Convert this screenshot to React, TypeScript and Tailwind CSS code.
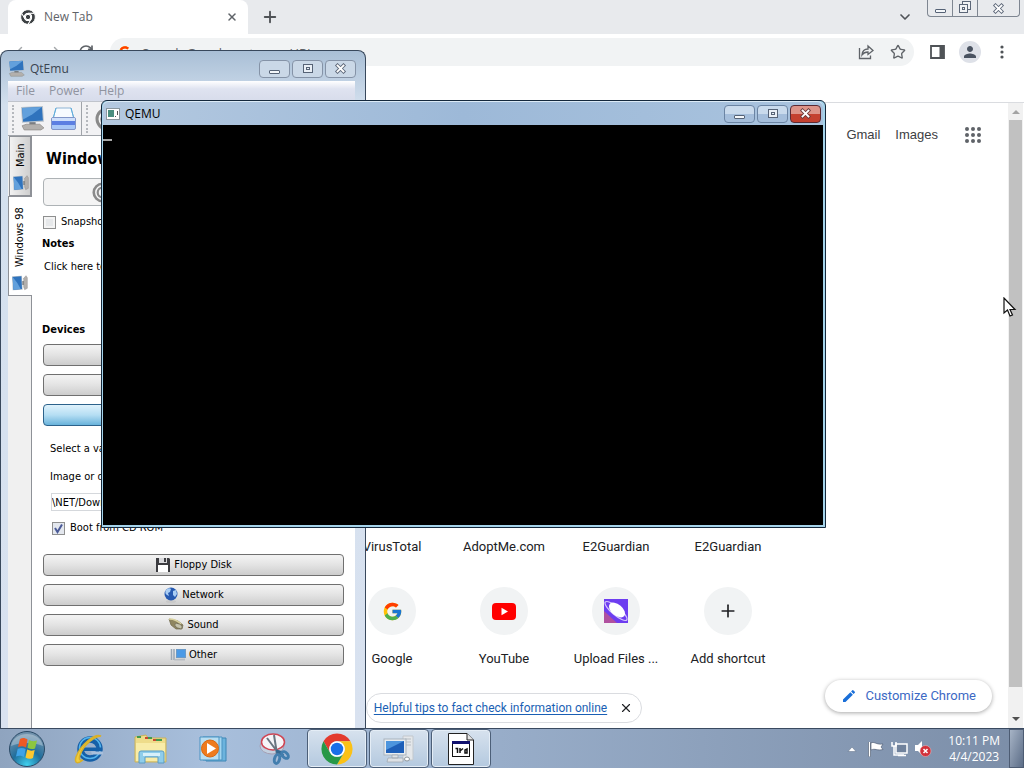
import { useState } from 'react';
import type { ReactNode } from 'react';
import { ChevronDown, Plus, X, ArrowLeft, ArrowRight, RotateCw, Star } from 'lucide-react';
import { FcGoogle } from 'react-icons/fc';
import { MdEdit, MdPerson } from 'react-icons/md';

const ChromeLogo = ({ size, mono = false }: { size: number; mono?: boolean }) => (
  <svg width={size} height={size} viewBox="0 0 48 48" stroke={mono ? '#fff' : 'none'} strokeWidth={mono ? 3 : 0}>
    <path d="M4.95 13A22 22 0 0 1 43.05 13L24 13A11 11 0 0 0 14.47 29.5Z" fill={mono ? '#3c4043' : '#e33b2e'} />
    <path d="M43.05 13A22 22 0 0 1 24 46L33.53 29.5A11 11 0 0 0 24 13Z" fill={mono ? '#3c4043' : '#fbc116'} />
    <path d="M24 46A22 22 0 0 1 4.95 13L14.47 29.5A11 11 0 0 0 33.53 29.5Z" fill={mono ? '#3c4043' : '#279847'} />
    <circle cx="24" cy="24" r="11" fill="#fff" />
    <circle cx="24" cy="24" r={mono ? 8 : 8.8} fill={mono ? '#3c4043' : '#1a6fe8'} />
  </svg>
);

const MinGlyph = () => (
  <svg width="13" height="12" viewBox="0 0 13 12">
    <rect x="1.5" y="7.5" width="10" height="3" rx="0.5" fill="#f4f7fa" stroke="#566376" />
  </svg>
);

const MaxGlyph = () => (
  <svg width="12" height="11" viewBox="0 0 12 11" fill="#e9eff6" stroke="#566376">
    <rect x="1.5" y="1.500" width="9" height="8" />
    <rect x="4.5" y="4.500" width="3" height="2" />
  </svg>
);

const RestoreGlyph = () => (
  <svg width="14" height="14" viewBox="0 0 14 14" fill="#f1f3f5" stroke="#5c6778">
    <rect x="4.5" y="0.5" width="8" height="8" />
    <rect x="1.5" y="3.5" width="8" height="8" />
    <rect x="4.5" y="6.5" width="2" height="2" />
  </svg>
);

const CloseGlyph = ({ dark = '#5c6778' }: { dark?: string }) => (
  <svg width="13" height="11" viewBox="0 0 13 11" strokeLinecap="square">
    <path d="M3.500 2.500L9.500 8.500M9.500 2.500L3.500 8.500" stroke={dark} strokeWidth="3.600" />
    <path d="M3.500 2.500L9.500 8.500M9.500 2.500L3.500 8.500" stroke="#fff" strokeWidth="1.800" />
  </svg>
);

const ComputerIcon = ({ size }: { size: number }) => (
  <svg width={size} height={size} viewBox="0 0 24 24">
    <path d="M1 1L22 0L23 15L2 16Z" fill="#b9c3cc" />
    <path d="M2 2L21 1L22 14L3 15Z" fill="#2f73bd" />
    <path d="M2 2L21 1L12 8L3 13Z" fill="#62a0dc" />
    <path d="M9 15.500H15V18H9Z" fill="#777d83" />
    <path d="M2 19L6 17.500H19L23 21L20 23H4Z" fill="#b3b0ad" stroke="#86827f" strokeWidth="0.600" />
  </svg>
);

const PrinterIcon = () => (
  <svg width="26" height="24" viewBox="0 0 26 24">
    <path d="M5 1H20L23 12H2Z" fill="#f7fbff" stroke="#8fb4d4" />
    <path d="M5 1L2 12M20 1L23 12" stroke="#5aaede" />
    <rect x="0.500" y="10.500" width="24" height="12" rx="1.500" fill="#a9c8f7" stroke="#8296c8" />
    <rect x="1" y="11" width="23" height="4" fill="#cfe0fb" />
    <rect x="1" y="14" width="23" height="4" fill="#5c7fe2" />
  </svg>
);

const RingIcon = ({ size }: { size: number }) => (
  <svg width={size} height={size} viewBox="0 0 24 24">
    <circle cx="12" cy="12" r="10" fill="#f4f4f4" stroke="#8a8a8a" strokeWidth="3" />
    <circle cx="12" cy="12" r="5.500" fill="none" stroke="#8a8a8a" strokeWidth="2.500" />
  </svg>
);

const FloppyIcon = () => (
  <svg width="16" height="16" viewBox="0 0 16 16">
    <path d="M1 1H14L15 2V15H1Z" fill="#3c3c40" />
    <rect x="4" y="1" width="8" height="5" fill="#d9d9dc" />
    <rect x="9" y="1" width="2" height="4" fill="#3c3c40" />
    <rect x="3" y="8" width="10" height="7" fill="#fff" />
  </svg>
);

const GlobeIcon = () => (
  <svg width="16" height="16" viewBox="0 0 16 16">
    <ellipse cx="8" cy="14.500" rx="5" ry="1.500" fill="#c9c9c9" />
    <circle cx="8" cy="7" r="6.500" fill="#2659b0" />
    <path d="M3 3C5 1 7 1 8 2L7 5L5 6L6 9L4 8C2 7 2 5 3 3ZM10 4L13 3L14 7L12 10L10 8Z" fill="#a9cdf4" />
  </svg>
);

const SoundIcon = () => (
  <svg width="16" height="16" viewBox="0 0 16 16">
    <path d="M1 2L10 4L15 8L14 12L8 12L3 8Z" fill="#8f8660" stroke="#6f674a" strokeWidth="0.700" />
    <path d="M1 2C6 2 10 4 13 7" fill="none" stroke="#d9d2a0" strokeWidth="1.500" />
    <ellipse cx="10.500" cy="9" rx="4" ry="2.200" fill="#c4c2ac" stroke="#6b6750" strokeWidth="0.700" transform="rotate(25 10.500 9)" />
  </svg>
);

const OtherIcon = () => (
  <svg width="16" height="16" viewBox="0 0 16 16">
    <path d="M1.500 2V13M4 2V13" stroke="#9aa7b4" strokeWidth="1.500" />
    <rect x="6.500" y="2.500" width="9" height="8" fill="#4b9ae6" stroke="#6c9ac6" />
    <path d="M5 12L15 11.500V13.500H4Z" fill="#b7bcc2" />
  </svg>
);

const WindowButtons = ({ active = false }: { active?: boolean }) => {
  const base = 'flex h-[18px] w-[31px] items-center justify-center rounded-sm border';
  const plain = active
    ? 'border-[#6b84a3] bg-linear-to-b from-[#c9daec] from-50% to-[#a5bedb] to-50%'
    : 'border-[#8593a7] bg-[#cad8e7]';
  return (
    <div className="flex gap-[2px]">
      <button aria-label="Minimize" className={base + ' ' + plain}><MinGlyph /></button>
      <button aria-label="Maximize" className={base + ' ' + plain}><MaxGlyph /></button>
      <button
        aria-label="Close"
        className={base + ' ' + (active ? 'border-[#5b2a33] bg-linear-to-b from-[#dd9388] from-50% to-[#c4402f] to-50%' : plain)}
      >
        <CloseGlyph dark={active ? '#6b3a3a' : undefined} />
      </button>
    </div>
  );
};

const Shortcut = ({ label, children }: { label: string; children?: ReactNode }) => (
  <a href="#" className="flex h-[82px] flex-col items-center justify-between">
    <span className="flex size-12 items-center justify-center rounded-full bg-[#f1f3f4]">{children}</span>
    <span className="text-[13px] leading-5 text-[#202124]">{label}</span>
  </a>
);

const Browser = () => (
  <div className="flex min-h-0 flex-1 flex-col bg-white">
    <div className="flex h-[34px] shrink-0 items-start bg-[#e8eaed] pl-2">
      <div className="flex h-[34px] w-60 items-center rounded-t-lg bg-white pr-[10px] pl-3 font-['Open_Sans',sans-serif] text-[12px] text-[#5f6368]">
        <ChromeLogo size={16} mono />
        <span className="ml-2 flex-1">New Tab</span>
        <button aria-label="Close tab"><X size={12} strokeWidth={3} /></button>
      </div>
      <button aria-label="New tab" className="mt-2 ml-[13px] text-[#4f5357]"><Plus size={18} strokeWidth={2.5} /></button>
      <button aria-label="Search tabs" className="mt-[9px] mr-[14px] ml-auto text-[#4f5357]"><ChevronDown size={16} strokeWidth={2.5} /></button>
      <div className="mr-1 flex h-[17px] rounded-b-sm border border-t-0 border-[#7e8691]">
        <button aria-label="Minimize" className="flex w-6 items-center justify-center"><MinGlyph /></button>
        <button aria-label="Restore" className="flex w-[26px] items-center justify-center border-x border-[#7e8691]"><RestoreGlyph /></button>
        <button aria-label="Close" className="flex w-[41px] items-center justify-center"><CloseGlyph /></button>
      </div>
    </div>

    <div className="flex h-9 shrink-0 items-center text-[#5f6368]">
      <div className="flex w-[110px] items-center justify-between pr-4 pl-[13px]">
        <button aria-label="Back"><ArrowLeft size={17} color="#a5a8ab" /></button>
        <button aria-label="Forward"><ArrowRight size={17} color="#a5a8ab" /></button>
        <button aria-label="Reload"><RotateCw size={16} strokeWidth={2.5} /></button>
      </div>
      <div className="flex h-7 flex-1 items-center rounded-full bg-[#f1f3f4] pr-2 pl-2">
        <FcGoogle size={14} />
        <input
          aria-label="Address bar"
          placeholder="Search Google or type a URL"
          className="ml-[10px] min-w-0 flex-1 bg-transparent pt-[3px] font-['Open_Sans',sans-serif] text-[13px] placeholder:text-[#5f6368]"
        />
        <button aria-label="Share" className="mr-4">
          <svg width="16" height="16" viewBox="0 0 16 16" fill="none" stroke="currentColor" strokeWidth="1.300">
            <path d="M1.500 4V14.500H12.500V11.500" />
            <path d="M4 11C4.300 7 6.500 5 10 5V2L15 6.500L10 10.500V8C7.500 8 5.500 8.800 4 11Z" />
          </svg>
        </button>
        <button aria-label="Bookmark"><Star size={16} /></button>
      </div>
      <div className="flex items-center pr-[15px] pl-4">
        <button aria-label="Side panel">
          <svg width="15" height="14" viewBox="0 0 15 14">
            <path d="M1 1H14V13H1Z" fill="#fff" stroke="#4f5357" strokeWidth="1.800" />
            <path d="M9.500 1H14V13H9.500Z" fill="#4f5357" />
          </svg>
        </button>
        <button aria-label="Profile" className="ml-[14px] flex size-[22px] items-center justify-center rounded-full bg-[#dee1e8] text-[#4a5361]">
          <MdPerson size={18} />
        </button>
        <button aria-label="Menu" className="ml-[14px]">
          <svg width="14" height="14" viewBox="0 0 14 14" fill="#4f5357">
            <circle cx="7" cy="2" r="1.600" /><circle cx="7" cy="7" r="1.600" /><circle cx="7" cy="12" r="1.600" />
          </svg>
        </button>
      </div>
    </div>

    {/* empty bookmarks bar */}
    <div className="h-[33px] shrink-0 border-b border-[#dadce0]" />

    <div className="flex min-h-0 flex-1">
      <main className="relative flex min-w-0 flex-1 flex-col items-center pb-[5px] font-[Roboto,sans-serif]">
        <nav className="flex w-full items-center justify-end gap-[15px] pt-5 pr-[27px] font-['Liberation_Sans',sans-serif] text-[13px] leading-6 text-[#3c4043]">
          <a href="#">Gmail</a>
          <a href="#">Images</a>
          <button aria-label="Google apps" className="ml-3">
            <svg width="16" height="16" viewBox="0 0 16 16" fill="#5f6368">
              {[2, 8, 14].map((y) => [2, 8, 14].map((x) => <circle key={x + '-' + y} cx={x} cy={y} r="2" />))}
            </svg>
          </button>
        </nav>

        <div className="mt-auto grid grid-cols-[repeat(5,112px)] gap-y-[30px]">
          <div className="col-start-2"><Shortcut label="VirusTotal" /></div>
          <Shortcut label="AdoptMe.com" />
          <Shortcut label="E2Guardian" />
          <Shortcut label="E2Guardian" />
          <div className="col-start-2"><Shortcut label="Google"><FcGoogle size={21} /></Shortcut></div>
          <Shortcut label="YouTube">
            <svg width="24" height="17" viewBox="0 0 24 17">
              <rect width="24" height="17" rx="4" fill="#f00" />
              <path d="M9.500 4.800V12.200L16 8.500Z" fill="#fff" />
            </svg>
          </Shortcut>
          <Shortcut label="Upload Files ...">
            <svg width="24" height="24" viewBox="0 0 24 24">
              <rect width="24" height="24" fill="#6d3df0" />
              <path d="M0 12L13 24H0Z" fill="#b0509f" />
              <ellipse cx="12" cy="12" rx="14" ry="4" fill="none" stroke="#d5c6fb" strokeWidth="1.200" transform="rotate(40 12 12)" />
              <ellipse cx="13" cy="11" rx="9.500" ry="5.500" fill="#fff" transform="rotate(40 13 11)" />
            </svg>
          </Shortcut>
          <Shortcut label="Add shortcut"><Plus size={20} color="#202124" /></Shortcut>
        </div>

        <div className="mt-6 flex h-[30px] items-center rounded-full border border-[#dadce0] pr-2 pl-[7px] text-[12px]">
          <a href="#" className="text-[#1a5fb4] underline underline-offset-2">Helpful tips to fact check information online</a>
          <button aria-label="Dismiss" className="ml-3 text-[#202124]"><X size={14} /></button>
        </div>

        <button className="absolute right-4 bottom-4 flex h-8 items-center rounded-full bg-white pr-4 pl-4 text-[13px] text-[#3c69c4] shadow-[0_1px_4px_rgba(0,0,0,0.35)]">
          <MdEdit size={16} className="mr-2 text-[#1a6fd8]" />
          Customize Chrome
        </button>
      </main>

      <div className="mr-px flex w-[15px] flex-col items-center bg-[#f1f1f1]">
        <svg width="15" height="17" viewBox="0 0 15 17"><path d="M4 11H12L8 7Z" fill="#a3a3a3" /></svg>
        <div className="w-[13px] flex-1 bg-[#c1c1c1]" />
        <div className="flex h-[41px] items-end">
          <svg width="15" height="17" viewBox="0 0 15 17"><path d="M4 6H12L8 10Z" fill="#505050" /></svg>
        </div>
      </div>
    </div>
  </div>
);

const deviceButton = 'flex h-[22px] shrink-0 items-center justify-center gap-[3px] rounded-sm border border-[#707070] bg-linear-to-b from-[#f1f1f1] from-10% via-[#e3e3e3] via-50% to-[#cdcdcd] text-[11px]';

const Grip = () => <div className="h-7 border-l-2 border-dotted border-[#b5b8bd]" />;

const QtEmuWindow = () => {
  const [snapshot, setSnapshot] = useState(false);
  const [bootCd, setBootCd] = useState(true);
  const [image, setImage] = useState('\\NET/Downloads');

  return (
    <section className="absolute top-[50px] bottom-10 left-0 flex w-[366px] flex-col rounded-t-lg border border-b-0 border-[#38485c] bg-linear-to-b from-[#a9bfd6] via-[#d3e0ee] via-8% to-[#d9e2f0] pr-[10px] pl-[7px] font-['DejaVu_Sans_Condensed','DejaVu_Sans',sans-serif] text-[11px] text-black">
      <header className="-mr-px flex h-[30px] shrink-0 items-center pt-[5px]">
        <ComputerIcon size={17} />
        <h1 className="ml-[5px] flex-1 font-['Open_Sans',sans-serif] text-[12px] text-[#3a4450]">QtEmu</h1>
        <WindowButtons />
      </header>
      <nav className="flex h-5 shrink-0 items-center bg-linear-to-b from-white via-[#dfe3f0] via-40% to-[#d7dceb] pl-px font-['Open_Sans',sans-serif] text-[12px] text-[#9094a0]">
        <button className="px-[7px]">File</button>
        <button className="px-[7px]">Power</button>
        <button className="px-[7px]">Help</button>
      </nav>
      <div className="flex h-[35px] shrink-0 items-center border-t border-b border-[#a0a4aa] border-t-[#c0c4cc] bg-[#f2f2f4] pl-1">
        <Grip />
        <button aria-label="New machine" className="ml-[6px]"><ComputerIcon size={25} /></button>
        <button aria-label="Print" className="ml-[6px]"><PrinterIcon /></button>
        <div className="mr-1 ml-1 h-full border-l border-[#a0a4aa]" />
        <Grip />
        <button aria-label="Start" className="ml-[7px]"><RingIcon size={24} /></button>
      </div>

      <div className="flex min-h-0 flex-1">
        <div className="flex w-6 shrink-0 flex-col items-end border-r border-[#8e9197] bg-[#f0f0f0]">
          <button className="flex h-[60px] w-[22px] rotate-180 items-center gap-2 border border-[#8e9197] bg-linear-to-r from-[#cfcfcf] to-[#f2f2f2] pt-1 pr-[2px] [writing-mode:vertical-rl]">
            <span className="rotate-90"><ComputerIcon size={16} /></span>
            Main
          </button>
          <button className="-mr-px flex h-[100px] w-6 rotate-180 items-center gap-2 border border-l-0 border-[#8e9197] bg-white pt-1 pl-px [writing-mode:vertical-rl]">
            <span className="rotate-90"><ComputerIcon size={16} /></span>
            Windows 98
          </button>
        </div>

        <div className="flex min-w-0 flex-1 flex-col bg-white px-[11px] pt-[11px] leading-4">
          <h2 className="ml-[3px] text-[16px] leading-6 font-bold">Windows 98</h2>
          <button aria-label="Start Windows 98" className="mt-[7px] flex h-7 w-[118px] shrink-0 items-center justify-center rounded-sm border border-[#adb2b5] bg-[#f4f4f4]">
            <RingIcon size={21} />
          </button>
          <label className="mt-2 flex h-4 items-center gap-[5px]">
            <input
              type="checkbox"
              checked={snapshot}
              onChange={() => setSnapshot(!snapshot)}
              className="size-[13px] appearance-none border border-[#8e8f8f] bg-[#e6e8ea] shadow-[inset_0_0_0_2px_#f4f4f4]"
            />
            Snapshot
          </label>
          <h3 className="mt-[6px] -ml-px font-bold">Notes</h3>
          <p className="mt-[7px] ml-px">Click here to</p>
          <h3 className="mt-[47px] -ml-px font-bold">Devices</h3>
          <div className="mt-[6px] flex flex-col gap-2">
            <button aria-label="Memory" className={deviceButton} />
            <button aria-label="Hard Disk" className={deviceButton} />
            <button aria-label="CD ROM" className="h-[22px] rounded-sm border border-[#2c628b] bg-linear-to-b from-[#dff2fc] via-[#b5def3] via-50% to-[#68b3db]" />
          </div>
          <div className="flex flex-col pt-[15px] pl-[7px]">
            <p>Select a valid</p>
            <label htmlFor="image" className="mt-3">Image or device</label>
            <input
              id="image"
              value={image}
              onChange={(e) => setImage(e.target.value)}
              className="mt-2 ml-px h-[18px] border border-[#d5d8dc]"
            />
            <label className="mt-[9px] flex h-4 items-center gap-[5px] pl-[2px]">
              <span className="grid size-[13px] place-items-center">
                <input
                  type="checkbox"
                  checked={bootCd}
                  onChange={() => setBootCd(!bootCd)}
                  className="col-start-1 row-start-1 size-[13px] appearance-none border border-[#8e8f8f] bg-[#e3e7ee]"
                />
                {bootCd && (
                  <svg width="11" height="11" viewBox="0 0 11 11" className="pointer-events-none col-start-1 row-start-1">
                    <path d="M2 5L4.500 9L9 1.500" fill="none" stroke="#4a5a97" strokeWidth="2" />
                  </svg>
                )}
              </span>
              Boot from CD ROM
            </label>
          </div>
          <div className="mt-[18px] flex flex-col gap-2">
            <button className={deviceButton}><FloppyIcon />Floppy Disk</button>
            <button className={deviceButton}><GlobeIcon />Network</button>
            <button className={deviceButton}><SoundIcon />Sound</button>
            <button className={deviceButton}><OtherIcon />Other</button>
          </div>
        </div>
      </div>
    </section>
  );
};

const QemuWindow = () => (
  <section className="absolute top-[100px] left-[101px] flex h-[428px] w-[725px] flex-col rounded-t-md border border-[#14283c] bg-[#a5d3ea] pr-[2px] pb-[2px] pl-px">
    <header className="flex h-6 shrink-0 items-center rounded-t-md border-t border-[#dcebf7] bg-linear-to-r from-[#b4c9e0] via-[#9db9d8] to-[#a9c3de] pr-[2px] pl-[3px]">
      <svg width="14" height="12" viewBox="0 0 14 12">
        <rect x="0.500" y="0.500" width="13" height="11" fill="#fff" stroke="#8a979f" />
        <rect x="2" y="2" width="6" height="7" fill="#4b8f80" />
        <path d="M9 8.500H10M11.500 3V7" stroke="#555" />
      </svg>
      <h1 className="ml-[5px] flex-1 font-['Open_Sans',sans-serif] text-[12px] text-black">QEMU</h1>
      <WindowButtons active />
    </header>
    <div className="flex-1 bg-black pt-[14px]">
      <div className="h-[2px] w-[9px] bg-[#a8a8a8]" />
    </div>
  </section>
);

const TaskButton = ({ label, open = false, children }: { label: string; open?: boolean; children: ReactNode }) => (
  <button
    aria-label={label}
    className={'flex w-[60px] items-center justify-center rounded-sm ' + (open ? 'border border-[#4c5f78] bg-linear-to-b from-[#d7e2ee] to-[#b4c9df] shadow-[inset_0_0_0_1px_#e4edf6]' : '')}
  >
    {children}
  </button>
);

const Taskbar = () => (
  <footer className="flex h-10 shrink-0 border-t border-[#3a4a60] bg-linear-to-r from-[#8fa4bf] via-[#a8bfdc] via-20% to-[#7c8ea8]">
    <button aria-label="Start" className="flex w-[54px] items-center justify-center">
      <svg width="38" height="38" viewBox="0 0 38 38">
        <defs>
          <radialGradient id="orb" cx="50%" cy="95%" r="85%">
            <stop offset="0" stopColor="#3fd0ee" />
            <stop offset="0.500" stopColor="#1f6e9c" />
            <stop offset="1" stopColor="#6f91ac" />
          </radialGradient>
        </defs>
        <circle cx="19" cy="19" r="17.500" fill="url(#orb)" stroke="#2b4a66" />
        <path d="M3 16C6 0 32 0 35 16C26 12 12 12 3 16Z" fill="#fff" opacity="0.300" />
        <path d="M12 9C15 7.500 17 8 19.500 9.500L18 17.500C15 16 13 16 10 17Z" fill="#ee5a24" />
        <path d="M21 10C24 11.500 26 11.500 29 10.500L27 18.500C24 19.500 22 19 19.500 17.800Z" fill="#8cc63f" />
        <path d="M9.700 18.800C13 17.500 15 17.700 17.700 19L16 27C13 25.500 11 25.500 8 26.500Z" fill="#3fa3e8" />
        <path d="M19.200 19.600C22 21 24 21 26.700 20L25 28C22 29.300 20 29 17.500 27.600Z" fill="#fdc82f" />
      </svg>
    </button>
    <div className="ml-[5px] flex gap-[2px]">
      <TaskButton label="Internet Explorer">
        <svg width="32" height="32" viewBox="0 0 32 32">
          <circle cx="17" cy="16" r="9.500" fill="none" stroke="#1660a8" strokeWidth="6.500" />
          <circle cx="17" cy="15" r="10.500" fill="none" stroke="#54b4ec" strokeWidth="1.500" />
          <path d="M11 14.500H29V18H11Z" fill="#1660a8" />
          <path d="M18 18.500H30V21.500H19Z" fill="#a9c0dc" />
          <path d="M28 3C22 0 8 11 3 24C1 31 5 31 10 27C4 29 6 21 12 13C18 6 25 3 28 3Z" fill="#f0cd3d" stroke="#d9b02a" strokeWidth="1.500" />
        </svg>
      </TaskButton>
      <TaskButton label="Windows Explorer">
        <svg width="34" height="30" viewBox="0 0 34 30">
          <path d="M1 3L12 1L14 4H32V28H1Z" fill="#eedc8a" stroke="#c9b25c" />
          <path d="M3 3H7M14 4H18M22 6H28" stroke="#419a4e" strokeWidth="2" />
          <path d="M11 4H14M19 6H22" stroke="#cc4a31" strokeWidth="2" />
          <path d="M2 9H31V27H2Z" fill="#f8eca8" />
          <path d="M5 29V19Q5 17 7 17H28Q30 17 30 19V29H24V23H11V29Z" fill="#8fcdea" stroke="#5b9cc4" />
          <path d="M9 19H26V22H9Z" fill="#d7f0fa" />
        </svg>
      </TaskButton>
      <TaskButton label="Media Player">
        <svg width="28" height="26" viewBox="0 0 28 26">
          <path d="M7 2H27V25H7Z" fill="#6cb3dd" stroke="#3f86b5" />
          <path d="M4 1H23V24H4Z" fill="#a4d6ef" stroke="#4a93c2" />
          <path d="M1 1H20V24H1Z" fill="#b8def2" stroke="#4a93c2" />
          <circle cx="11" cy="12.500" r="8.500" fill="#ee7b1e" stroke="#d96710" />
          <path d="M8 7V18L17 12.500Z" fill="#fff" />
        </svg>
      </TaskButton>
      <TaskButton label="Snipping Tool">
        <svg width="32" height="34" viewBox="0 0 32 34">
          <ellipse cx="13" cy="14" rx="12" ry="8" fill="#c2d0e0" stroke="#a49fb4" />
          <ellipse cx="14" cy="10" rx="11.500" ry="8" fill="#f5f5f8" stroke="#ce4553" strokeWidth="1.500" />
          <path d="M8 6L20 22M15 3L18 22" stroke="#697580" strokeWidth="2" />
          <path d="M17 19L21 20L24 24" stroke="#35668e" strokeWidth="3" fill="none" />
          <ellipse cx="18" cy="27" rx="2.500" ry="4.500" fill="none" stroke="#437eae" strokeWidth="3" transform="rotate(15 18 27)" />
          <ellipse cx="26" cy="23" rx="2.500" ry="4" fill="none" stroke="#437eae" strokeWidth="3" transform="rotate(-45 26 23)" />
        </svg>
      </TaskButton>
      <TaskButton label="Google Chrome" open><ChromeLogo size={34} /></TaskButton>
      <TaskButton label="QtEmu" open>
        <svg width="32" height="28" viewBox="0 0 32 28">
          <path d="M20 1H30V25H20Z" fill="#e4e7ea" stroke="#c3c8cd" />
          <path d="M22 4H28M22 7H28M22 10H28" stroke="#b7bdc3" />
          <rect x="1" y="4" width="22" height="16" fill="#e9edf0" stroke="#a9b3bd" />
          <rect x="3" y="6" width="18" height="12" fill="#1e5fb8" />
          <path d="M3 6H21L3 15Z" fill="#4d95de" />
          <path d="M9 20H15V23H9ZM5 23H20V27H4Z" fill="#dde1e5" stroke="#9ca5ad" strokeWidth="0.700" />
          <ellipse cx="24" cy="24" rx="2.500" ry="2" fill="#fff" stroke="#8f979e" />
        </svg>
      </TaskButton>
      <TaskButton label="QEMU" open>
        <svg width="26" height="32" viewBox="0 0 26 32">
          <path d="M0.500 0.500H19L25.500 7V31.500H0.500Z" fill="#fff" stroke="#222" />
          <path d="M19 0.500V7H25.500" fill="#e4e4e4" stroke="#222" />
          <rect x="4.500" y="9.500" width="17" height="14" fill="#fff" stroke="#111" />
          <rect x="4" y="8" width="18" height="3" fill="#10106e" />
          <path d="M7.500 15.500H9.500V20M12 15V20M12 18L15 15.500M17 20V17L19 16V20Z" stroke="#111" strokeWidth="1.500" fill="none" />
        </svg>
      </TaskButton>
    </div>

    <div className="ml-auto flex items-center">
      <button aria-label="Show hidden icons">
        <svg width="10" height="6" viewBox="0 0 10 6"><path d="M1 5.500H9L5 1Z" fill="#fff" stroke="#5d6d85" strokeWidth="0.500" /></svg>
      </button>
      <svg width="18" height="18" viewBox="0 0 18 18" className="ml-[10px]">
        <path d="M2.500 2V16.500" stroke="#44536a" strokeWidth="3" />
        <path d="M2.500 2V16.500" stroke="#fff" strokeWidth="1.600" />
        <path d="M4 3C7 1 9 5 16 4L14 7L16 9.500C10 11 8 8 4 10Z" fill="#fff" stroke="#44536a" strokeWidth="0.600" />
      </svg>
      <svg width="17" height="16" viewBox="0 0 17 16" className="ml-[6px]">
        <rect x="5" y="3" width="11" height="9" fill="#70829c" stroke="#fff" strokeWidth="1.500" />
        <path d="M1 1V5H5V1M3 5V14H13" fill="none" stroke="#fff" strokeWidth="1.500" />
        <path d="M7 14.500H15" stroke="#fff" strokeWidth="1.500" />
      </svg>
      <svg width="18" height="17" viewBox="0 0 18 17" className="ml-[6px]">
        <path d="M1 5H4L8 1V15L4 11H1Z" fill="#fff" />
        <circle cx="11.500" cy="11" r="5.500" fill="#d2313a" stroke="#f1bfc1" strokeWidth="0.500" />
        <path d="M9.500 9L13.500 13M13.500 9L9.500 13" stroke="#fff" strokeWidth="1.500" />
      </svg>
      <div className="mr-[9px] ml-[16px] text-center font-['Open_Sans',sans-serif] text-[12px] leading-4 text-white">
        <p>10:11 PM</p>
        <p>4/4/2023</p>
      </div>
      <button aria-label="Show desktop" className="h-full w-[15px] border border-[#4d5c73] bg-linear-to-br from-[#a7b4c6] to-[#5c6d87]" />
    </div>
  </footer>
);

const App = () => (
  <div className="relative flex h-screen flex-col overflow-hidden">
    <Browser />
    <Taskbar />
    <QtEmuWindow />
    <QemuWindow />
    <svg width="14" height="21" viewBox="0 0 14 21" className="pointer-events-none absolute top-[297px] left-[1003px]">
      <path d="M1 1V16L4.500 13L7 19L9.500 18L7 12.500H12Z" fill="#fff" stroke="#111" strokeWidth="1.200" />
    </svg>
  </div>
);

export default App;
